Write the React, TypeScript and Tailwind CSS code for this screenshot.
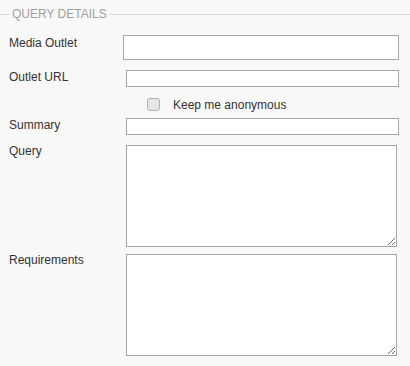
import React from 'react'

const font = { fontFamily: '"Liberation Sans", Arial, sans-serif' }

function Label({ text, className = '' }: { text: string; className?: string }) {
  return <div className={`w-[117px] shrink-0 text-[12px] leading-[14px] text-[#333] ${className}`}>{text}</div>
}

export default function App() {
  return (
    <div className="min-h-screen bg-[#f8f8f8] text-[12px]" style={font}>
      <div className="flex h-[28px] items-center">
        <div className="h-px w-[10px] bg-[#dcdcdc]" />
        <span className="px-[2px] text-[12px] leading-[14px] text-[#9e9e9e]">QUERY DETAILS</span>
        <div className="h-px flex-1 bg-[#dcdcdc]" />
      </div>

      <div className="pl-[9px]">
        <div className="mt-[7px] flex">
          <div className="w-[114px] shrink-0 pt-[1px] text-[12px] leading-[14px] text-[#333]">Media Outlet</div>
          <input className="h-[25px] w-[276px] border border-[#a6a6a6] bg-white outline-none" />
        </div>

        <div className="mt-[10px] flex">
          <Label text="Outlet URL" />
          <input className="h-[17px] w-[273px] border border-[#a6a6a6] bg-white outline-none" />
        </div>

        <div className="mt-[11px] flex h-[13px] items-center">
          <div className="ml-[138px] h-[13px] w-[13px] rounded-[3px] border border-[#b0b0b0] bg-[#e6e6e6]" />
          <span className="ml-[13px] leading-[14px] text-[#333]">Keep me anonymous</span>
        </div>

        <div className="mt-[7px] flex">
          <Label text="Summary" />
          <input className="h-[17px] w-[273px] border border-[#a6a6a6] bg-white outline-none" />
        </div>

        <div className="mt-[10px] flex">
          <Label text="Query" className="-mt-[1px]" />
          <textarea className="h-[102px] w-[271px] border border-[#a6a6a6] bg-white outline-none" />
        </div>

        <div className="mt-[7px] flex">
          <Label text="Requirements" className="-mt-[1px]" />
          <textarea className="h-[102px] w-[271px] border border-[#a6a6a6] bg-white outline-none" />
        </div>
      </div>
    </div>
  )
}
